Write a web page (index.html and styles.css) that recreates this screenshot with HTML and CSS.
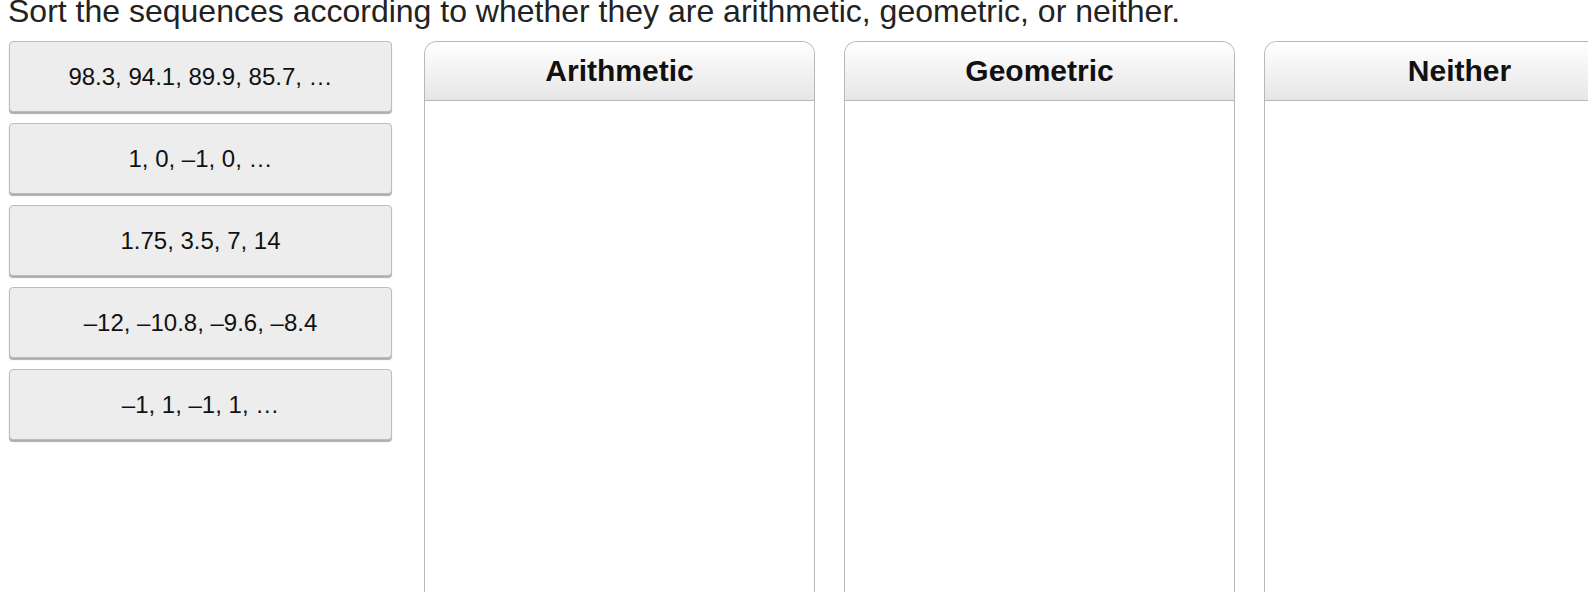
FILE: index.html
```html
<!DOCTYPE html>
<html lang="en">
<head>
<meta charset="utf-8">
<title>Sort the sequences</title>
<link rel="stylesheet" href="styles.css">
</head>
<body>
<div class="page">
  <p class="prompt">Sort the sequences according to whether they are arithmetic, geometric, or neither.</p>
  <div class="board">
    <div class="tiles">
      <div class="tile">98.3, 94.1, 89.9, 85.7, …</div>
      <div class="tile">1, 0, –1, 0, …</div>
      <div class="tile">1.75, 3.5, 7, 14</div>
      <div class="tile">–12, –10.8, –9.6, –8.4</div>
      <div class="tile">–1, 1, –1, 1, …</div>
    </div>
    <div class="bins">
      <div class="bin"><div class="bin-head">Arithmetic</div><div class="bin-body"></div></div>
      <div class="bin"><div class="bin-head">Geometric</div><div class="bin-body"></div></div>
      <div class="bin"><div class="bin-head">Neither</div><div class="bin-body"></div></div>
    </div>
  </div>
</div>
</body>
</html>
```

FILE: styles.css
```css
html, body {
  margin: 0;
  padding: 0;
  background: #ffffff;
  overflow: hidden;
  height: 100%;
}
.page {
  width: 1700px;
  font-family: "Liberation Sans", Arial, Helvetica, sans-serif;
  color: #1e1e1e;
}
.prompt {
  margin: -5px 0 14px 8px;
  font-size: 32px;
  line-height: 32px;
  white-space: nowrap;
  color: #222;
}
.board {
  display: flex;
  align-items: flex-start;
  gap: 32px;
  padding-left: 9px;
}
.tiles {
  display: flex;
  flex-direction: column;
  gap: 11px;
  width: 383px;
  flex: none;
}
.tile {
  box-sizing: border-box;
  height: 71px;
  display: flex;
  align-items: center;
  justify-content: center;
  background: #ededed;
  border: 1px solid #bdbdbd;
  border-radius: 4px;
  box-shadow: 0 2px 1px rgba(0, 0, 0, 0.32);
  font-size: 24px;
  color: #111;
}
.bins {
  display: flex;
  gap: 29px;
}
.bin {
  box-sizing: border-box;
  width: 391px;
  height: 700px;
  border: 1.5px solid #b8b8b8;
  border-bottom: none;
  border-radius: 13px 13px 0 0;
  display: flex;
  flex-direction: column;
  flex: none;
  background: #fff;
}
.bin-head {
  height: 58px;
  flex: none;
  display: flex;
  align-items: center;
  justify-content: center;
  border-bottom: 1.5px solid #b8b8b8;
  border-radius: 12px 12px 0 0;
  background: linear-gradient(#ffffff, #e6e6e6);
  font-weight: bold;
  font-size: 30px;
  color: #111;
}
.bin-body {
  flex: 1;
}
```
